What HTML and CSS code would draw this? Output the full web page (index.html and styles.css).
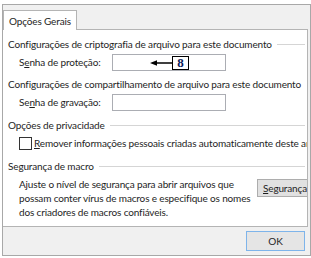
FILE: index.html
```html
<!DOCTYPE html>
<html>
<head>
<meta charset="utf-8">
<link rel="stylesheet" href="styles.css">
</head>
<body>
<div class="window">
  <div class="tabs">
    <div class="tab">Opções Gerais</div>
  </div>
  <div class="panel">
    <div class="group-title"><span>Configurações de criptografia de arquivo para este documento</span><i class="rule"></i></div>
    <div class="field-row">
      <label class="field-label">S<u>e</u>nha de proteção:</label>
      <div class="input">
        <div class="callout">
          <svg class="arrow" width="22" height="6" viewBox="0 0 22 6"><path d="M0 3 L7 0.3 L7 2.2 L22 2.2 L22 3.8 L7 3.8 L7 5.7 Z" fill="#000"/></svg>
          <span class="num">8</span>
        </div>
      </div>
    </div>
    <div class="group-title gap"><span>Configurações de compartilhamento de arquivo para este documento</span><i class="rule"></i></div>
    <div class="field-row">
      <label class="field-label">Se<u>n</u>ha de gravação:</label>
      <div class="input"></div>
    </div>
    <div class="group-title gap-lg"><span>Opções de privacidade</span><i class="rule"></i></div>
    <div class="check-row">
      <span class="checkbox"></span>
      <span class="check-label"><u>R</u>emover informações pessoais criadas automaticamente deste arquivo ao salvar</span>
    </div>
    <div class="group-title gap-lg"><span>Segurança de macro</span><i class="rule"></i></div>
    <div class="macro-row">
      <p class="macro-text">Ajuste o nível de segurança para abrir arquivos que<br>possam conter vírus de macros e especifique os nomes<br>dos criadores de macros confiáveis.</p>
      <button class="btn macro-btn"><u>S</u>egurança de Macro...</button>
    </div>
  </div>
  <div class="footer">
    <button class="btn ok">OK</button>
  </div>
</div>
</body>
</html>
```
FILE: styles.css
```css
html, body {
  margin: 0;
  padding: 0;
  background: #ffffff;
}
body {
  font-family: "Lato", "Noto Sans", sans-serif;
  font-size: 10px;
  letter-spacing: -0.15px;
  color: #1e1e1e;
  white-space: nowrap;
}
.window {
  margin: 4px 0 0 2px;
  width: 307px;
  height: 250px;
  border: 1px solid #a8a8a8;
  background: #f0f0f0;
  display: flex;
  flex-direction: column;
  overflow: hidden;
}
.tabs {
  height: 24px;
  flex: none;
  display: flex;
  align-items: flex-end;
  position: relative;
  z-index: 1;
}
.tab {
  height: 20px;
  width: 74px;
  box-sizing: border-box;
  border: 1px solid #b4b4b4;
  border-bottom: none;
  background: #ffffff;
  padding-left: 5px;
  line-height: 20px;
  margin-bottom: -1px;
}
.panel {
  flex: none;
  height: 198px;
  box-sizing: border-box;
  width: 305px;
  background: #ffffff;
  border: 1px solid #b4b4b4;
  border-left: none;
  padding: 6px 0 0 5px;
  overflow: hidden;
}
.group-title {
  display: flex;
  align-items: center;
  height: 16px;
}
.group-title.gap {
  margin-top: 4px;
}
.group-title.gap-lg {
  margin-top: 5px;
}
.group-title .rule {
  flex: 1;
  height: 1px;
  background: #d5d5d5;
  margin: 1px 2px 0 5px;
}
.field-row {
  display: flex;
  align-items: center;
  height: 20px;
  padding-left: 11px;
}
.field-label {
  width: 93px;
}
.input {
  width: 112px;
  height: 15px;
  border: 1px solid #abadb3;
  background: #fff;
  position: relative;
}
.callout {
  position: absolute;
  left: 37px;
  top: 1px;
  display: flex;
  align-items: center;
}
.arrow {
  display: block;
}
.num {
  display: block;
  width: 15px;
  height: 12px;
  border: 1px solid #000;
  font-family: "Liberation Serif", serif;
  font-weight: bold;
  font-size: 13px;
  letter-spacing: 0;
  line-height: 12px;
  text-align: center;
  color: #0a1a5a;
}
.check-row {
  display: flex;
  align-items: center;
  height: 20px;
  padding-left: 11px;
}
.checkbox {
  width: 11px;
  height: 11px;
  border: 1px solid #333;
  background: #fff;
  margin-right: 2px;
  flex: none;
}
.macro-row {
  display: flex;
  padding-left: 11px;
  padding-top: 3px;
}
.macro-text {
  margin: 0;
  width: 238px;
  line-height: 14px;
  flex: none;
}
.btn {
  font-family: inherit;
  font-size: 10px;
  letter-spacing: -0.15px;
  color: #1e1e1e;
  background: #e1e1e1;
  border: 1px solid #adadad;
  padding: 0 5px;
  height: 18px;
}
.macro-btn {
  margin-top: 2px;
  flex: none;
}
.footer {
  flex: 1;
  display: flex;
  justify-content: flex-end;
  align-items: center;
  padding-right: 5px;
}
.ok {
  width: 59px;
  height: 20px;
  background: #e5e5e5;
  border: 1px solid #7eb4ea;
}
```
